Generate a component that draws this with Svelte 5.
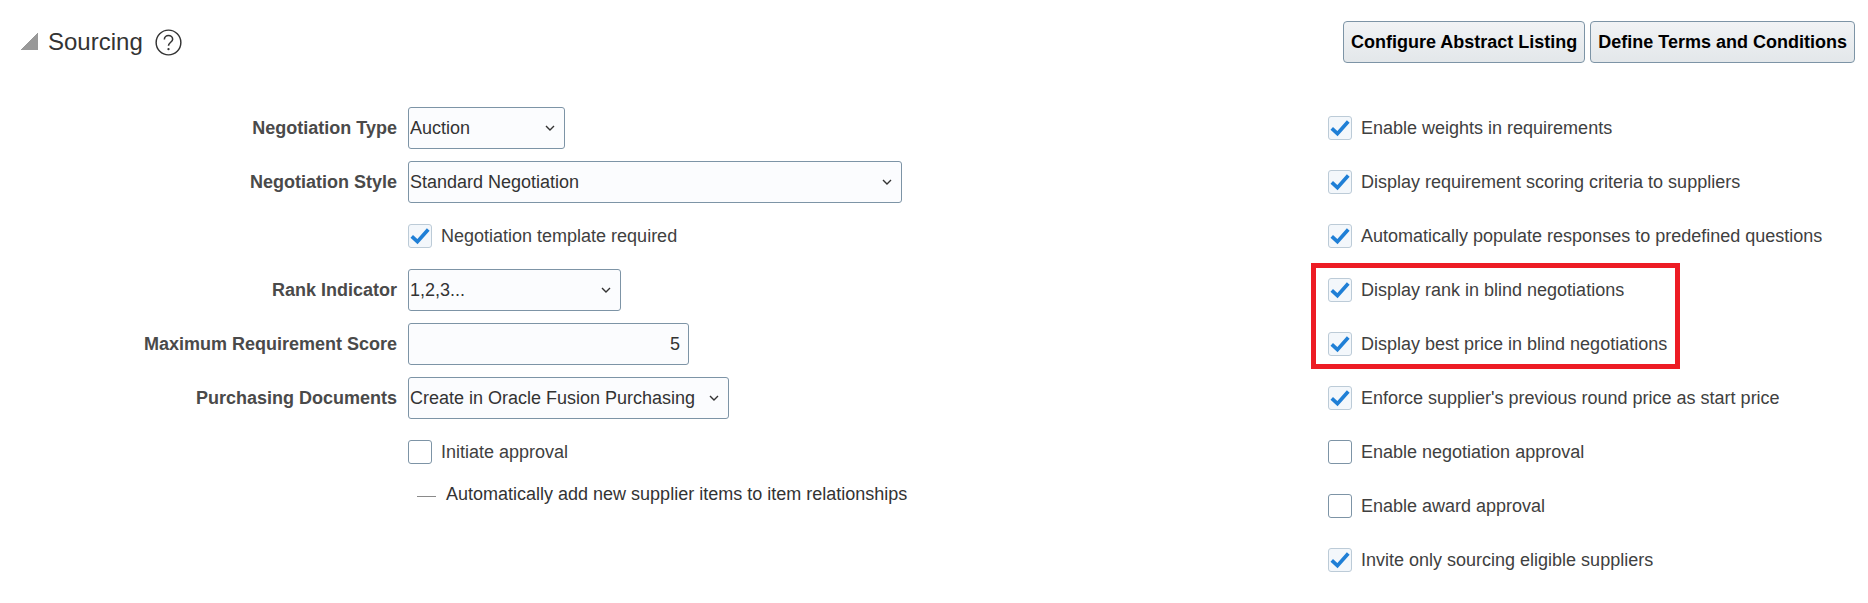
<script>
  const leftRows = [
    { label: 'Negotiation Type', kind: 'select', value: 'Auction', width: 157 },
    { label: 'Negotiation Style', kind: 'select', value: 'Standard Negotiation', width: 494 },
    { kind: 'check', text: 'Negotiation template required', checked: true },
    { label: 'Rank Indicator', kind: 'select', value: '1,2,3...', width: 213 },
    { label: 'Maximum Requirement Score', kind: 'number', value: '5', width: 281 },
    { label: 'Purchasing Documents', kind: 'select', value: 'Create in Oracle Fusion Purchasing', width: 321 },
    { kind: 'check', text: 'Initiate approval', checked: false }
  ];

  const rightTop = [
    { text: 'Enable weights in requirements', checked: true },
    { text: 'Display requirement scoring criteria to suppliers', checked: true },
    { text: 'Automatically populate responses to predefined questions', checked: true }
  ];
  const highlighted = [
    { text: 'Display rank in blind negotiations', checked: true },
    { text: 'Display best price in blind negotiations', checked: true }
  ];
  const rightBottom = [
    { text: "Enforce supplier's previous round price as start price", checked: true },
    { text: 'Enable negotiation approval', checked: false },
    { text: 'Enable award approval', checked: false },
    { text: 'Invite only sourcing eligible suppliers', checked: true }
  ];
</script>

{#snippet check(item)}
  <div class="check-row">
    <span class="box" class:on={item.checked}>
      {#if item.checked}
        <svg viewBox="0 0 24 24" width="22" height="22" aria-hidden="true">
          <path d="M3 12.5 L9.2 18.2 L21 5" fill="none" stroke="#1f7fd6" stroke-width="4" />
        </svg>
      {/if}
    </span>
    <span class="check-text">{item.text}</span>
  </div>
{/snippet}

<div class="page">
  <header class="head">
    <div class="title">
      <span class="disclosure"></span>
      <h2>Sourcing</h2>
      <svg class="help" viewBox="0 0 26 26" width="27" height="27" aria-hidden="true">
        <circle cx="13" cy="13" r="11.9" fill="none" stroke="#333" stroke-width="1.4" />
        <path d="M9 10.2 C9 7.6 11 6.2 13 6.2 C15.3 6.2 17 7.8 17 9.8 C17 12.6 13 13 13 16.2" fill="none" stroke="#333" stroke-width="1.5" />
        <circle cx="13" cy="19.4" r="1.1" fill="#333" />
      </svg>
    </div>
    <div class="actions">
      <button>Configure Abstract Listing</button>
      <button>Define Terms and Conditions</button>
    </div>
  </header>

  <div class="body">
    <div class="form">
      {#each leftRows as row}
        <div class="form-label">{row.label ?? ''}</div>
        <div class="form-field">
          {#if row.kind === 'select'}
            <div class="select-wrap" style="width: {row.width}px">
              <select>
                <option>{row.value}</option>
              </select>
              <svg class="chevron" viewBox="0 0 10 6" width="10" height="6" aria-hidden="true">
                <path d="M1 1 L5 5 L9 1" fill="none" stroke="#333" stroke-width="1.4" />
              </svg>
            </div>
          {:else if row.kind === 'number'}
            <input class="num" style="width: {row.width}px" value={row.value} />
          {:else}
            {@render check(row)}
          {/if}
        </div>
      {/each}
      <div class="form-label"></div>
      <div class="auto-row">
        <span class="dash"></span>
        <span class="auto-text">Automatically add new supplier items to item relationships</span>
      </div>
    </div>

    <div class="checks">
      {#each rightTop as item}
        {@render check(item)}
      {/each}
      <div class="highlight">
        {#each highlighted as item}
          {@render check(item)}
        {/each}
        <div class="frame"></div>
      </div>
      {#each rightBottom as item}
        {@render check(item)}
      {/each}
    </div>
  </div>
</div>

<style>
  :global(body) {
    background: #fff;
  }

  .page {
    width: 1868px;
    height: 603px;
    font-family: 'Liberation Sans', Arial, sans-serif;
    color: #333;
    overflow: hidden;
  }

  .head {
    display: flex;
    justify-content: space-between;
    padding: 21px 13px 0 21px;
    height: 63px;
    box-sizing: border-box;
  }

  .title {
    display: flex;
    align-items: center;
    height: 42px;
  }

  .disclosure {
    width: 17px;
    height: 17px;
    background: linear-gradient(135deg, transparent 50%, #999 50%);
    margin-right: 10px;
    margin-top: -1px;
  }

  h2 {
    margin: 0;
    font-size: 24px;
    font-weight: 400;
    color: #333;
  }

  .help {
    margin-left: 12px;
  }

  .actions {
    display: flex;
    gap: 5px;
  }

  button {
    height: 42px;
    padding: 0 7px;
    border: 1px solid #7d94a6;
    border-radius: 4px;
    background: linear-gradient(#f1f3f5, #e3e7ea);
    font: bold 18px 'Liberation Sans', Arial, sans-serif;
    color: #000;
    white-space: nowrap;
  }

  .body {
    display: flex;
    padding-top: 38px;
  }

  .form {
    width: 1328px;
    display: grid;
    grid-template-columns: 397px 1fr;
    grid-auto-rows: 54px;
    column-gap: 11px;
    align-content: start;
  }

  .form-label {
    display: flex;
    align-items: center;
    justify-content: flex-end;
    font-size: 18px;
    font-weight: bold;
    color: #4a4a4a;
  }

  .form-field {
    display: flex;
    align-items: center;
  }

  .select-wrap {
    position: relative;
    height: 42px;
  }

  select {
    appearance: none;
    width: 100%;
    height: 100%;
    padding: 0 24px 0 1px;
    border: 1px solid #7d94a6;
    border-radius: 3px;
    background: #fbfcfe;
    font: 18px 'Liberation Sans', Arial, sans-serif;
    color: #333;
  }

  .chevron {
    position: absolute;
    right: 10px;
    top: 18px;
  }

  .num {
    height: 42px;
    box-sizing: border-box;
    padding: 0 8px;
    border: 1px solid #7d94a6;
    border-radius: 3px;
    background: #fbfcfe;
    text-align: right;
    font: 18px 'Liberation Sans', Arial, sans-serif;
    color: #333;
  }

  .auto-row {
    display: flex;
    align-items: center;
    height: 40px;
    margin-top: -5px;
    font-size: 18px;
  }

  .dash {
    width: 19px;
    height: 1px;
    background: #8a8a8a;
    margin: 5px 10px 0 9px;
  }

  .checks {
    display: flex;
    flex-direction: column;
  }

  .check-row {
    display: flex;
    align-items: center;
    height: 54px;
    font-size: 18px;
  }

  .box {
    width: 24px;
    height: 24px;
    box-sizing: border-box;
    display: flex;
    align-items: center;
    justify-content: center;
    border: 1px solid #7d94a6;
    border-radius: 3px;
    background: #fff;
    margin-right: 9px;
  }

  .box.on {
    border-color: #bccbd7;
    background: #f3f7fb;
  }

  .check-text {
    color: #404040;
    white-space: nowrap;
  }

  .highlight {
    position: relative;
  }

  .frame {
    position: absolute;
    top: 0;
    left: -17px;
    width: 369px;
    height: 106px;
    box-sizing: border-box;
    border: 5px solid #ed1c24;
    pointer-events: none;
  }
</style>
